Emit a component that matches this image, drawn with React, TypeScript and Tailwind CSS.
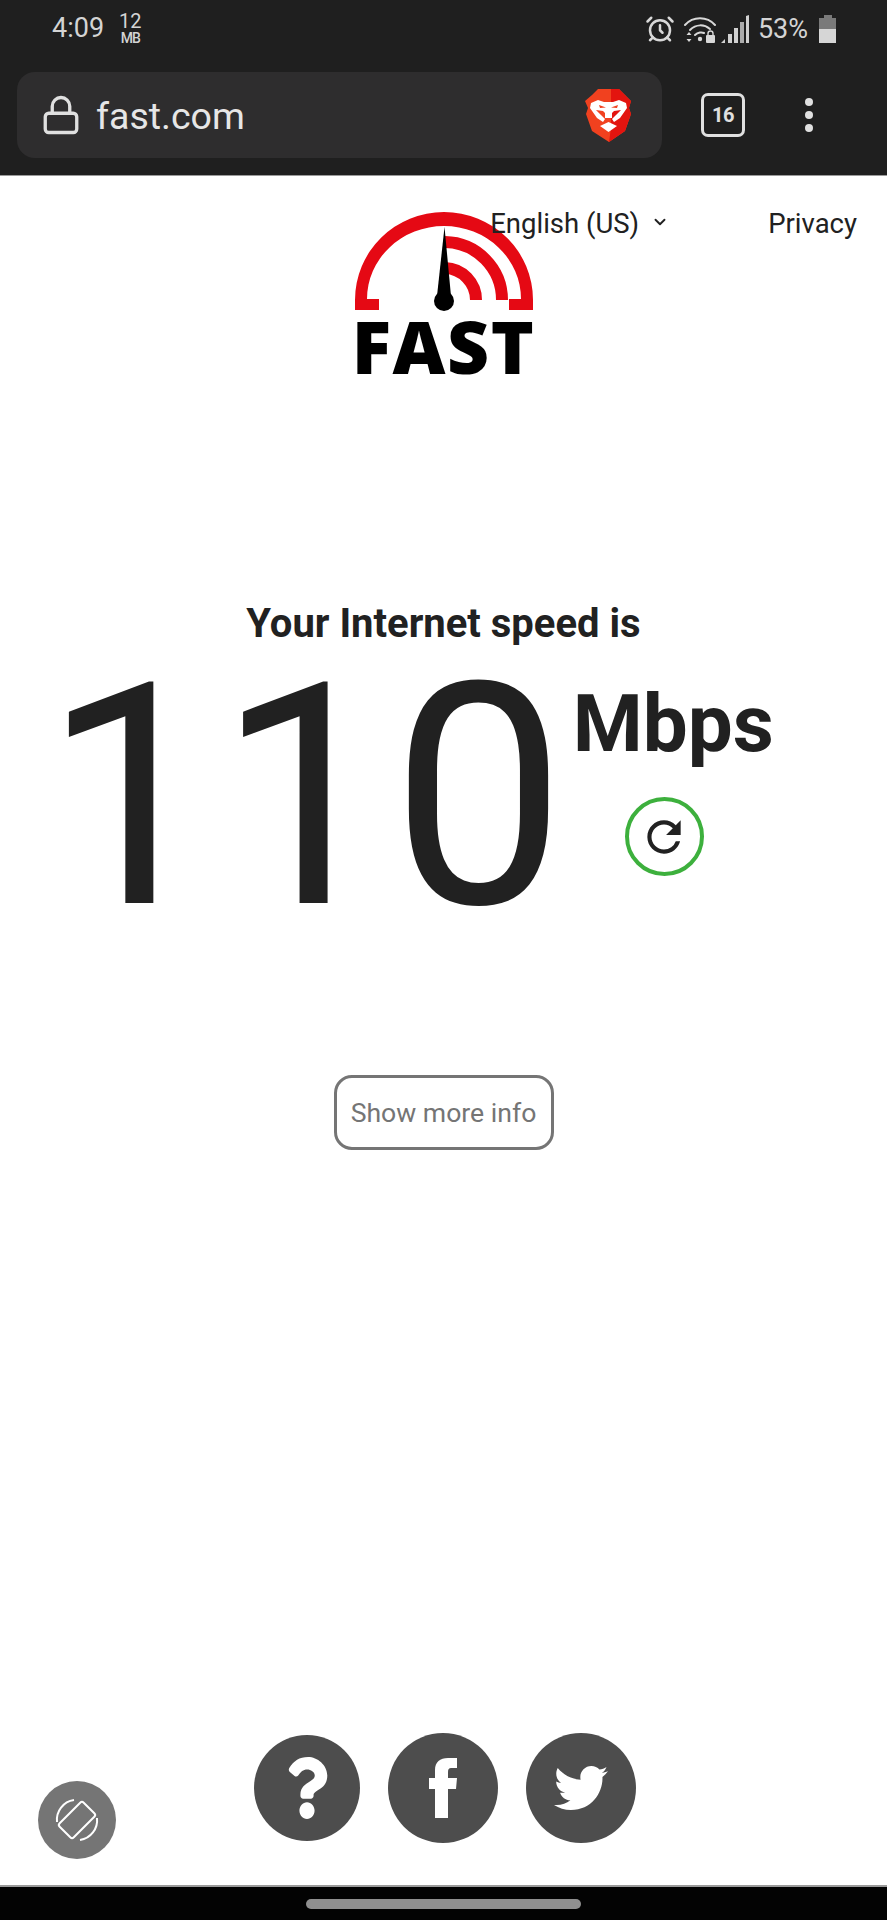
import { AlarmClock, ChevronDown, Lock } from 'lucide-react';
import { FaQuestion, FaTwitter } from 'react-icons/fa';
import { MdRefresh } from 'react-icons/md';

const roboto = { fontFamily: 'Roboto, "Liberation Sans", sans-serif' };

function WifiLock() {
  return (
    <svg width="32" height="28" viewBox="0 0 32 28" fill="none" stroke="#d8d8d8" strokeLinecap="round">
      <path d="M1 10 C9 1 23 1 31 10" strokeWidth="2" />
      <path d="M6 15 C12 9 20 9 26 14" strokeWidth="2" />
      <path d="M11 20 C14 17 18 17 20 18" strokeWidth="2" />
      <circle cx="16" cy="24" r="2.2" fill="#d8d8d8" stroke="none" />
      <path d="M5 17 l-2.5 3 h5 z M5 27 l-2.5 -3 h5 z" fill="#d8d8d8" stroke="none" />
      <rect x="22" y="20" width="9" height="8" rx="1" fill="#d8d8d8" stroke="none" />
      <path d="M24 20 v-1.5 a2.5 2.5 0 0 1 5 0 V20" strokeWidth="1.4" />
    </svg>
  );
}

function Signal() {
  return (
    <svg width="28" height="28" viewBox="0 0 28 28" fill="#d0d0d0">
      <path d="M0 28 L4 24 V28 Z" />
      <rect x="7" y="19" width="4" height="9" />
      <rect x="13" y="13" width="4" height="15" />
      <rect x="19" y="7" width="4" height="21" opacity="0.8" />
      <path d="M25 1 L28 0 V28 H25 Z" />
    </svg>
  );
}

function Battery() {
  return (
    <div className="flex w-[17px] flex-col items-center">
      <div className="h-[3px] w-[8px] bg-[#7a7a7a]" />
      <div className="h-[11px] w-full bg-[#7a7a7a]" />
      <div className="h-[14px] w-full bg-[#d6d6d6]" />
    </div>
  );
}

function BraveLogo() {
  return (
    <svg width="47" height="55" viewBox="0 0 47 55">
      <path d="M13 1 H34 L40 7 L46 13 L44 20 L46 26 L40 43 L24 54 L7 43 L1 26 L3 20 L0 13 L7 7 Z" fill="#f1411f" />
      <path d="M26 1 H34 L40 7 L46 13 L44 20 L46 26 L40 43 L24 54 L26 40 Z" fill="#e3140f" />
      <path
        d="M6 15 L13 12 L19 14 H28 L34 12 L41 15 L42 20 L35 30 L29 34 L27 31 L31 27 L36 22 L29 23 L27 25 L27 30 H20 L20 25 L18 23 L11 22 L16 27 L20 31 L18 34 L12 30 L5 20 Z"
        fill="#fff"
      />
      <path d="M14 17 L21 19.5 L15 20 Z M33 17 L26 19.5 L32 20 Z" fill="#f1411f" />
      <path d="M15 38 L23.5 34 L32 38 L23.5 44 Z" fill="#fff" />
    </svg>
  );
}

function FastLogo() {
  return (
    <div className="flex w-[178px] flex-col items-center">
      <svg width="178" height="99" viewBox="0 0 178 99">
        <path
          d="M0 98 V88 A89 88 0 0 1 178 88 V98 H154 V87 H166 A77 73 0 0 0 12 87 H24 V98 Z"
          fill="#e50914"
        />
        <path d="M90 30 A58 58 0 0 1 147 88" fill="none" stroke="#e50914" strokeWidth="12" />
        <path d="M90 56 A32 32 0 0 1 121 88" fill="none" stroke="#e50914" strokeWidth="12" />
        <path d="M89.5 15 L96 84 H82 Z" fill="#000" />
        <circle cx="89" cy="89" r="10" fill="#000" />
      </svg>
      <span
        className="mt-[5px] block text-[73px] leading-[60px] font-extrabold tracking-[1.5px] text-black"
        style={{ fontFamily: '"Open Sans", "Liberation Sans", sans-serif' }}
      >
        FAST
      </span>
    </div>
  );
}

function FacebookGlyph() {
  return (
    <svg width="28" height="60" viewBox="0 0 28 60" fill="#fff">
      <path d="M6 60 V31 H0 V20 H6 V12 C6 4 11 0 19 0 H28 V10 H22 C20 10 19 11 19 14 V20 H28 L27 31 H19 V60 Z" />
    </svg>
  );
}

function RotateIcon() {
  return (
    <svg width="44" height="44" viewBox="0 0 44 44" fill="none" stroke="#fff" strokeWidth="2">
      <rect x="12" y="5" width="20" height="34" rx="2.5" transform="rotate(45 22 22)" />
      <path d="M2 24 A20 20 0 0 1 19 2" />
      <path d="M42 20 A20 20 0 0 1 25 42" />
    </svg>
  );
}

export default function App() {
  return (
    <div className="flex h-[1920px] w-[887px] flex-col overflow-hidden bg-white" style={roboto}>
      {/* browser chrome */}
      <header className="h-[176px] shrink-0 border-b border-[#9a9a9a] bg-[#1f1f1f]">
        <div className="flex h-[72px] items-start justify-between pr-[51px] pl-[52px]">
          <div className="flex items-start gap-[15px] pt-[12px] text-[#d4d4d4]">
            <span className="text-[27px] leading-[32px]">4:09</span>
            <div className="-mt-[1px] flex flex-col items-center">
              <span className="text-[20px] leading-[20px]">12</span>
              <span className="text-[14px] leading-[14px] font-medium tracking-[-1px]">MB</span>
            </div>
          </div>
          <div className="flex items-center pt-[14px] text-[#d4d4d4]">
            <AlarmClock size={30} strokeWidth={2} color="#d8d8d8" />
            <div className="ml-[9px]">
              <WifiLock />
            </div>
            <div className="ml-[5px]">
              <Signal />
            </div>
            <span className="ml-[9px] text-[27px] leading-[28px]">53%</span>
            <div className="ml-[11px]">
              <Battery />
            </div>
          </div>
        </div>
        <div className="flex items-center pl-[17px]">
          <div className="flex h-[86px] w-[645px] items-center rounded-[18px] bg-[#2e2d2e] pr-[30px] pl-[23px]">
            <Lock size={42} strokeWidth={1.9} color="#e0e0e0" />
            <span className="mt-[2px] ml-[14px] flex-1 text-[37.5px] leading-[44px] text-[#e6e6e6]">fast.com</span>
            <BraveLogo />
          </div>
          <div className="ml-[39px] flex h-[44px] w-[44px] items-center justify-center rounded-[7px] border-[3px] border-[#e0e0e0] text-[20px] font-bold tracking-[-0.5px] text-[#e0e0e0]">
            16
          </div>
          <div className="ml-[60px] flex flex-col gap-[5px]">
            <div className="h-[8px] w-[8px] rounded-full bg-[#e0e0e0]" />
            <div className="h-[8px] w-[8px] rounded-full bg-[#e0e0e0]" />
            <div className="h-[8px] w-[8px] rounded-full bg-[#e0e0e0]" />
          </div>
        </div>
      </header>

      {/* page */}
      <main className="relative flex flex-1 flex-col items-center">
        <nav className="absolute top-[30px] right-[30px] flex items-center text-[27.5px] leading-[36px] text-[#212121]">
          <span>English (US)</span>
          <ChevronDown size={18} strokeWidth={2.5} className="mb-[4px] ml-[12px]" />
          <span className="ml-[99px]">Privacy</span>
        </nav>

        <div className="mt-[36px]">
          <FastLogo />
        </div>

        <h1 className="mt-[226px] text-[40px] leading-[44px] font-bold text-[#212121]">Your Internet speed is</h1>

        <div className="-mt-[4px] flex w-full items-start pl-[43px]">
          <span className="text-[310px] leading-[310px] text-[#212121]">110</span>
          <div className="ml-[7px] flex flex-col items-start pt-[42px]">
            <span className="text-[80px] leading-[80px] font-bold text-[#212121]">Mbps</span>
            <div className="mt-[33px] ml-[52px] flex h-[79px] w-[79px] items-center justify-center rounded-full border-[4px] border-[#3db03d]">
              <MdRefresh size={50} color="#212121" />
            </div>
          </div>
        </div>

        <button className="mt-[123px] flex h-[75px] w-[220px] items-center justify-center rounded-[18px] border-[3px] border-[#757575] text-[26.6px] text-[#757575]">
          Show more info
        </button>

        <footer className="mt-auto mb-[42px] ml-[3px] flex items-center gap-[28px] text-white">
          <div className="flex h-[106px] w-[106px] items-center justify-center rounded-full bg-[#4d4d4d]">
            <FaQuestion className="h-[62px] w-[42px]" preserveAspectRatio="none" />
          </div>
          <div className="flex h-[110px] w-[110px] items-center justify-center rounded-full bg-[#4d4d4d]">
            <FacebookGlyph />
          </div>
          <div className="flex h-[110px] w-[110px] items-center justify-center rounded-full bg-[#4d4d4d]">
            <FaTwitter size={54} />
          </div>
        </footer>

        <div className="absolute bottom-[26px] left-[38px] flex h-[78px] w-[78px] items-center justify-center rounded-full bg-[#757575]">
          <RotateIcon />
        </div>
      </main>

      {/* android nav bar */}
      <div className="flex h-[35px] shrink-0 items-center justify-center border-t-[2px] border-[#9a9a9a] bg-[#030303]">
        <div className="h-[10px] w-[275px] rounded-full bg-[#8f8f8f]" />
      </div>
    </div>
  );
}
